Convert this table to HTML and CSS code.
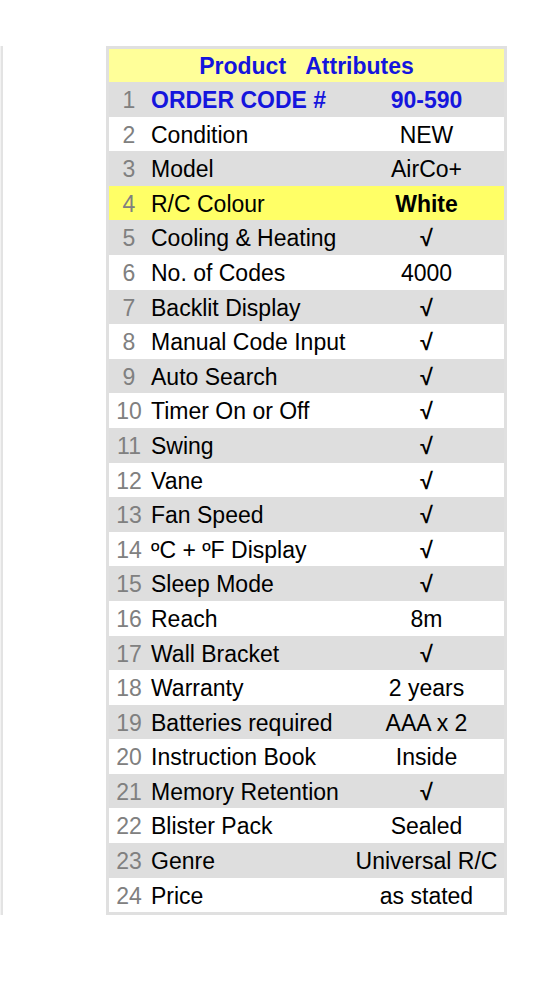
FILE: index.html
```html
<!DOCTYPE html>
<html>
<head>
<meta charset="utf-8">
<link rel="stylesheet" href="styles.css">
</head>
<body>
<div class="page">
  <div class="edge"></div>
  <div class="attrs">
    <div class="head">Product&nbsp;&nbsp;&nbsp;Attributes</div>
    <div class="row gray code"><span class="num">1</span><span class="lbl">ORDER CODE #</span><span class="val">90-590</span></div>
    <div class="row"><span class="num">2</span><span class="lbl">Condition</span><span class="val">NEW</span></div>
    <div class="row gray"><span class="num">3</span><span class="lbl">Model</span><span class="val">AirCo+</span></div>
    <div class="row hi"><span class="num">4</span><span class="lbl">R/C Colour</span><span class="val bold">White</span></div>
    <div class="row gray"><span class="num">5</span><span class="lbl">Cooling &amp; Heating</span><span class="val ok">√</span></div>
    <div class="row"><span class="num">6</span><span class="lbl">No. of Codes</span><span class="val">4000</span></div>
    <div class="row gray"><span class="num">7</span><span class="lbl">Backlit Display</span><span class="val ok">√</span></div>
    <div class="row"><span class="num">8</span><span class="lbl">Manual Code Input</span><span class="val ok">√</span></div>
    <div class="row gray"><span class="num">9</span><span class="lbl">Auto Search</span><span class="val ok">√</span></div>
    <div class="row"><span class="num">10</span><span class="lbl">Timer On or Off</span><span class="val ok">√</span></div>
    <div class="row gray"><span class="num">11</span><span class="lbl">Swing</span><span class="val ok">√</span></div>
    <div class="row"><span class="num">12</span><span class="lbl">Vane</span><span class="val ok">√</span></div>
    <div class="row gray"><span class="num">13</span><span class="lbl">Fan Speed</span><span class="val ok">√</span></div>
    <div class="row"><span class="num">14</span><span class="lbl">ºC + ºF Display</span><span class="val ok">√</span></div>
    <div class="row gray"><span class="num">15</span><span class="lbl">Sleep Mode</span><span class="val ok">√</span></div>
    <div class="row"><span class="num">16</span><span class="lbl">Reach</span><span class="val">8m</span></div>
    <div class="row gray"><span class="num">17</span><span class="lbl">Wall Bracket</span><span class="val ok">√</span></div>
    <div class="row"><span class="num">18</span><span class="lbl">Warranty</span><span class="val">2 years</span></div>
    <div class="row gray"><span class="num">19</span><span class="lbl">Batteries required</span><span class="val">AAA x 2</span></div>
    <div class="row"><span class="num">20</span><span class="lbl">Instruction Book</span><span class="val">Inside</span></div>
    <div class="row gray"><span class="num">21</span><span class="lbl">Memory Retention</span><span class="val ok">√</span></div>
    <div class="row"><span class="num">22</span><span class="lbl">Blister Pack</span><span class="val">Sealed</span></div>
    <div class="row gray"><span class="num">23</span><span class="lbl">Genre</span><span class="val">Universal R/C</span></div>
    <div class="row"><span class="num">24</span><span class="lbl">Price</span><span class="val">as stated</span></div>
  </div>
</div>
</body>
</html>
```
FILE: styles.css
```css
html, body {
  margin: 0;
  padding: 0;
  background: #ffffff;
}
body {
  font-family: "Liberation Sans", Arial, sans-serif;
  color: #000000;
}
.page {
  display: flex;
  align-items: stretch;
  padding-top: 46px;
}
.edge {
  width: 3px;
  background: #e3e3e3;
  border-left: 1px solid #f2f2f2;
  box-sizing: border-box;
}
.attrs {
  margin-left: 103px;
  width: 395px;
  border: 3px solid #e0e0e0;
  background: #ffffff;
}
.head {
  height: 33px;
  line-height: 34px;
  background: #ffff99;
  color: #1515dd;
  font-weight: bold;
  font-size: 23px;
  text-align: center;
}
.row {
  display: grid;
  grid-template-columns: 40px 200px 155px;
  height: 34.6px;
  line-height: 36.5px;
  font-size: 23px;
  white-space: nowrap;
}
.row.gray {
  background: #dedede;
}
.row.hi {
  background: #ffff66;
}
.num {
  color: #808080;
  text-align: center;
}
.lbl {
  padding-left: 2px;
}
.val {
  text-align: center;
}
.bold {
  font-weight: bold;
}
.ok {
  font-weight: bold;
}
.code .lbl, .code .val {
  color: #1515dd;
  font-weight: bold;
}
```
